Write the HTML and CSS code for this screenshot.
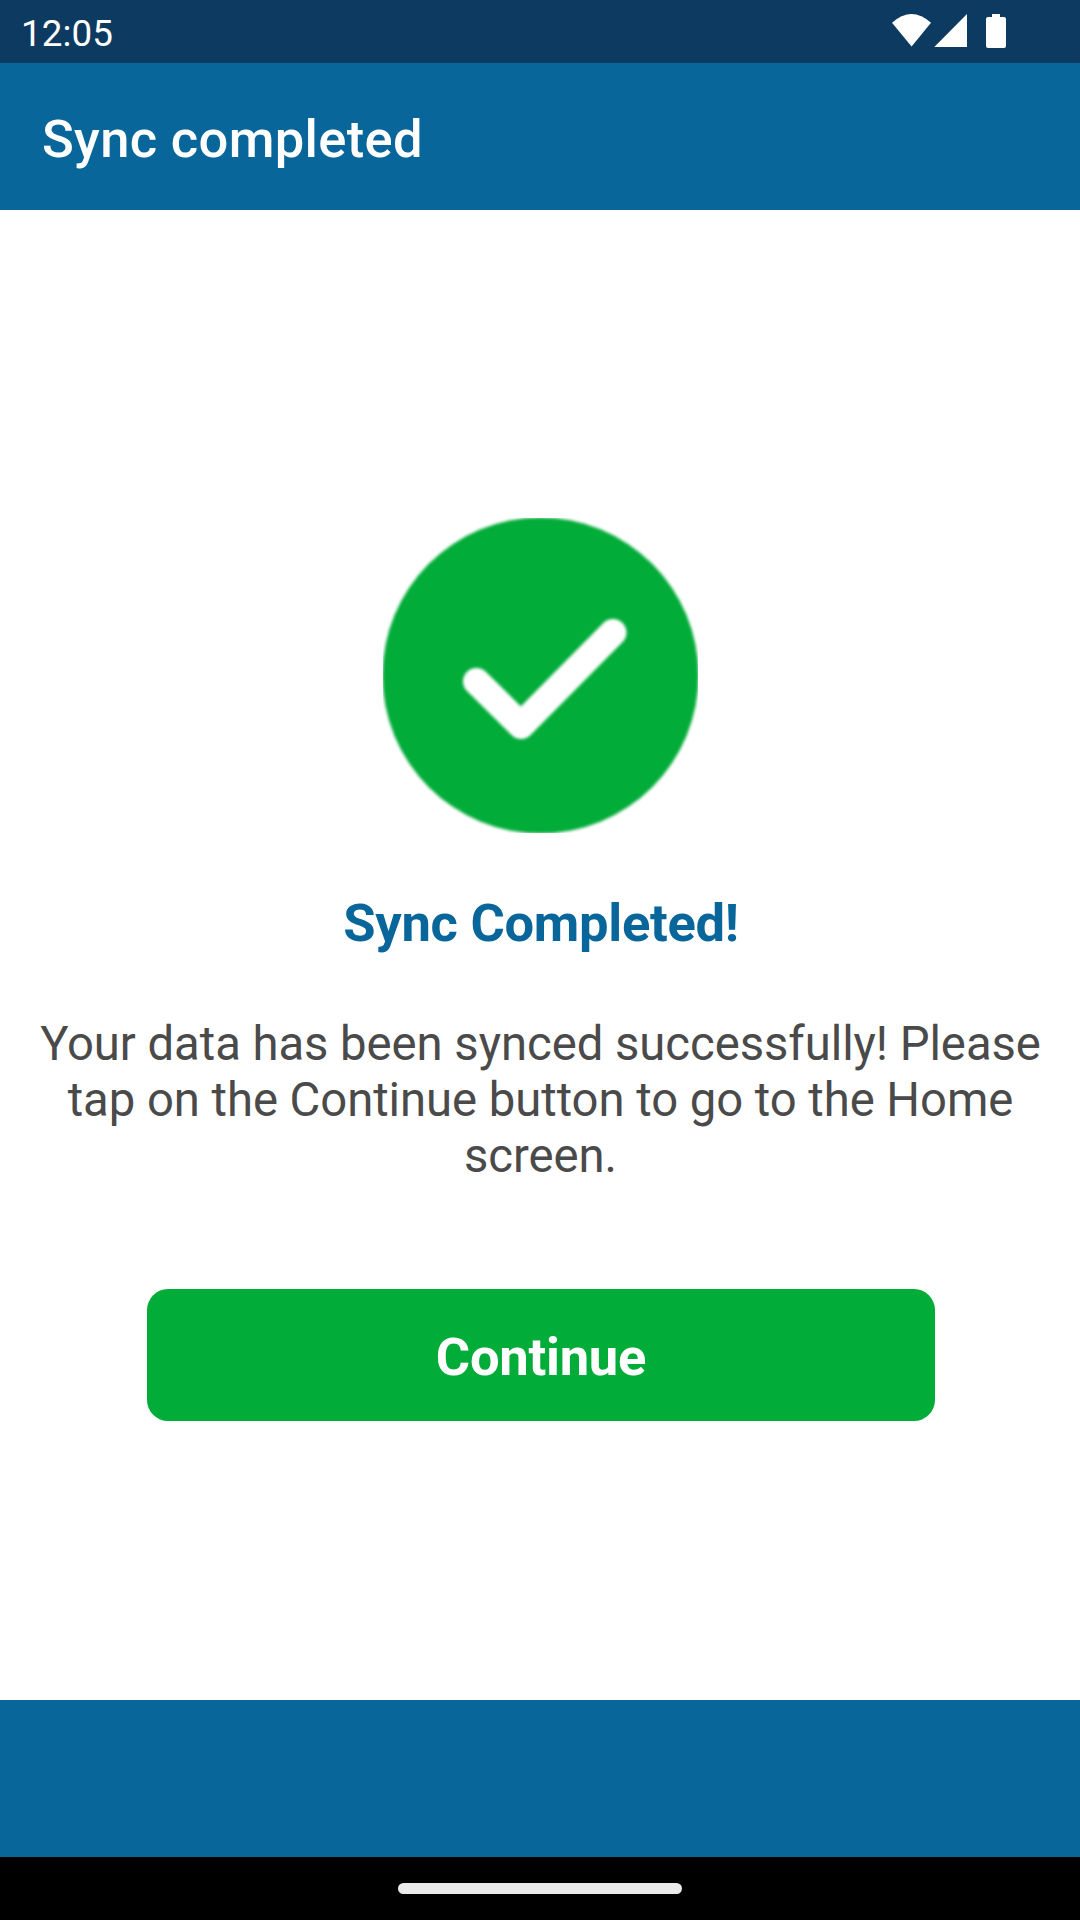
FILE: index.html
```html
<!DOCTYPE html>
<html lang="en">
<head>
<meta charset="utf-8">
<title>Sync completed</title>
<link rel="stylesheet" href="styles.css">
</head>
<body>
<div class="screen">
  <div class="status-bar">
    <span class="clock">12:05</span>
    <svg class="status-icons" width="116" height="36" viewBox="891 13 116 36" fill="#fff" aria-hidden="true">
      <path d="M892 22.8Q911.5 5.2 931 22.8L911.6 46.6Z"/>
      <path d="M934.3 47H967V14Z"/>
      <path d="M992 14h8v3h4a2 2 0 0 1 2 2v27a2 2 0 0 1-2 2h-16a2 2 0 0 1-2-2V19a2 2 0 0 1 2-2h4Z"/>
    </svg>
  </div>
  <header class="app-bar"><h1 class="app-title">Sync completed</h1></header>
  <main class="content">
    <svg class="success-icon" width="315" height="315" viewBox="0 0 315 315" aria-hidden="true">
      <defs><filter id="soft" x="-5%" y="-5%" width="110%" height="110%" color-interpolation-filters="sRGB"><feGaussianBlur stdDeviation="1.4"/></filter></defs>
      <g filter="url(#soft)">
        <circle cx="157.5" cy="157.5" r="158" fill="#02ac39"/>
        <path d="M93.5 163.5L138 207.5L230 114.5" fill="none" stroke="#fff" stroke-width="27" stroke-linecap="round" stroke-linejoin="round"/>
      </g>
    </svg>
    <h2 class="heading">Sync Completed!</h2>
    <p class="message">Your data has been synced successfully! Please tap on the Continue button to go to the Home screen.</p>
    <button class="continue" type="button">Continue</button>
  </main>
  <footer class="bottom-bar"></footer>
  <div class="nav-bar"><div class="nav-handle"></div></div>
</div>
</body>
</html>
```
FILE: styles.css
```css
* {
  box-sizing: border-box;
}

body,
h1,
h2,
p {
  margin: 0;
}

body {
  font-family: Roboto, sans-serif;
  background: #fff;
}

.screen {
  width: 1080px;
  height: 1920px;
  display: flex;
  flex-direction: column;
  overflow: hidden;
}

.status-bar {
  height: 63px;
  padding: 0 73px 1px 21px;
  display: flex;
  align-items: center;
  justify-content: space-between;
  background: #0d3a60;
}

.clock {
  padding-top: 6px;
  font-size: 36.75px;
  line-height: 44px;
  letter-spacing: 0.1px;
  color: #fff;
}

.app-bar {
  height: 147px;
  padding-left: 42px;
  display: flex;
  align-items: center;
  background: #08669a;
}

.app-title {
  padding-top: 4px;
  font-size: 52.5px;
  line-height: 62px;
  font-weight: 500;
  letter-spacing: 0.33px;
  color: #fff;
}

.content {
  flex: 1;
  padding: 308px 21px 0;
  display: flex;
  flex-direction: column;
  align-items: center;
}

.success-icon {
  display: block;
  margin-left: 1px;
}

.heading {
  margin-top: 59px;
  margin-left: 2px;
  font-size: 52.5px;
  line-height: 62px;
  font-weight: 700;
  letter-spacing: -0.28px;
  color: #08669a;
}

.message {
  margin-top: 62px;
  margin-left: 1px;
  font-size: 47.25px;
  line-height: 56px;
  letter-spacing: -0.05px;
  text-align: center;
  color: #4a4a4a;
}

.continue {
  width: 788px;
  height: 132px;
  margin-top: 105px;
  margin-left: 1px;
  padding: 4px 0 0 1px;
  border: 0;
  border-radius: 21px;
  background: #02ac39;
  font: 700 52.5px/62px Roboto, sans-serif;
  letter-spacing: -0.25px;
  color: #fff;
}

.bottom-bar {
  height: 157px;
  background: #08669a;
}

.nav-bar {
  height: 63px;
  display: flex;
  align-items: center;
  justify-content: center;
  background: #000;
}

.nav-handle {
  width: 284px;
  height: 11px;
  border-radius: 6px;
  background: #ebebeb;
}
```
